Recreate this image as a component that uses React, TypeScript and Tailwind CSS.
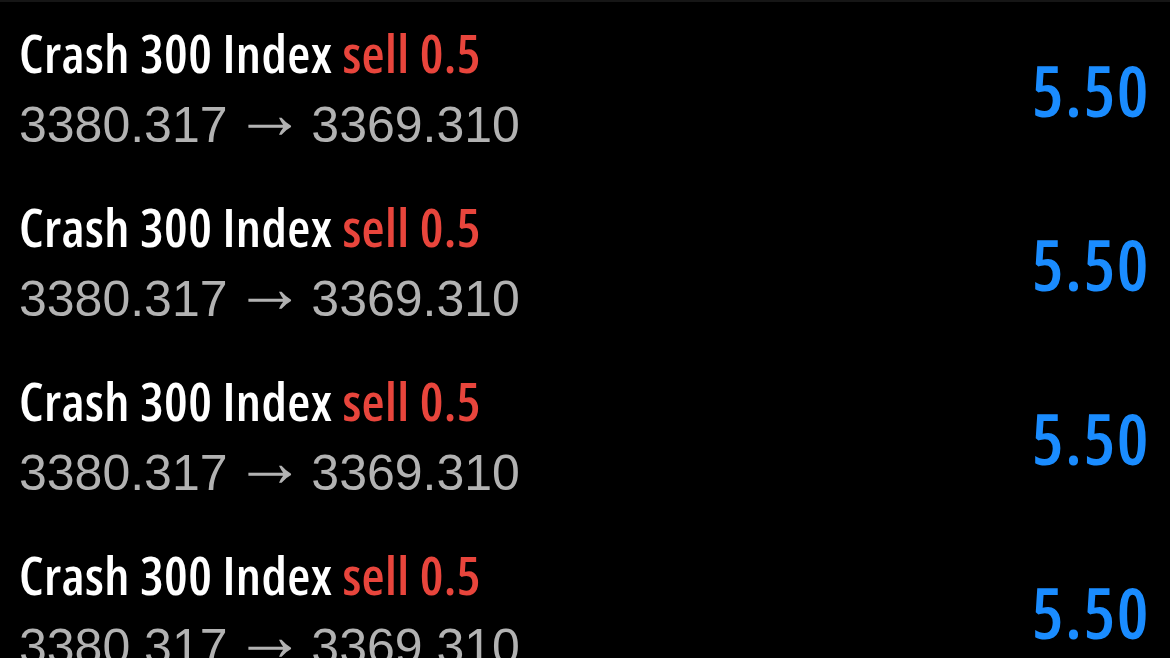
import React from "react";

const trades = [
  { symbol: "Crash 300 Index", side: "sell", volume: "0.5", open: "3380.317", close: "3369.310", profit: "5.50" },
  { symbol: "Crash 300 Index", side: "sell", volume: "0.5", open: "3380.317", close: "3369.310", profit: "5.50" },
  { symbol: "Crash 300 Index", side: "sell", volume: "0.5", open: "3380.317", close: "3369.310", profit: "5.50" },
  { symbol: "Crash 300 Index", side: "sell", volume: "0.5", open: "3380.317", close: "3369.310", profit: "5.50" },
];

const App = () => {
  return (
    <div className="h-[658px] w-[1170px] overflow-hidden border-t-2 border-[#161616] bg-black">
      {trades.map((t, i) => (
        <div key={i} className="flex h-[174px] items-center justify-between pl-[19px] pr-[20px]">
          <div>
            <div className="font-['Open_Sans',sans-serif] text-[53px] font-semibold font-stretch-[80%] leading-[71px] tracking-[0.4px] text-white">
              {t.symbol} <span className="text-[#e8453c]">{t.side} {t.volume}</span>
            </div>
            <div className="font-['Liberation_Sans',Arial,sans-serif] text-[50px] leading-[71px] text-[#b2b2b2]">
              {t.open} <span className="-mx-2 align-[4px] text-[72px] leading-[50px]">→</span> {t.close}
            </div>
          </div>
          <div className="font-['Open_Sans',sans-serif] text-[71px] font-semibold font-stretch-[80%] leading-none tracking-[1.5px] text-[#1a8cff]">
            {t.profit}
          </div>
        </div>
      ))}
    </div>
  );
};

export default App;
